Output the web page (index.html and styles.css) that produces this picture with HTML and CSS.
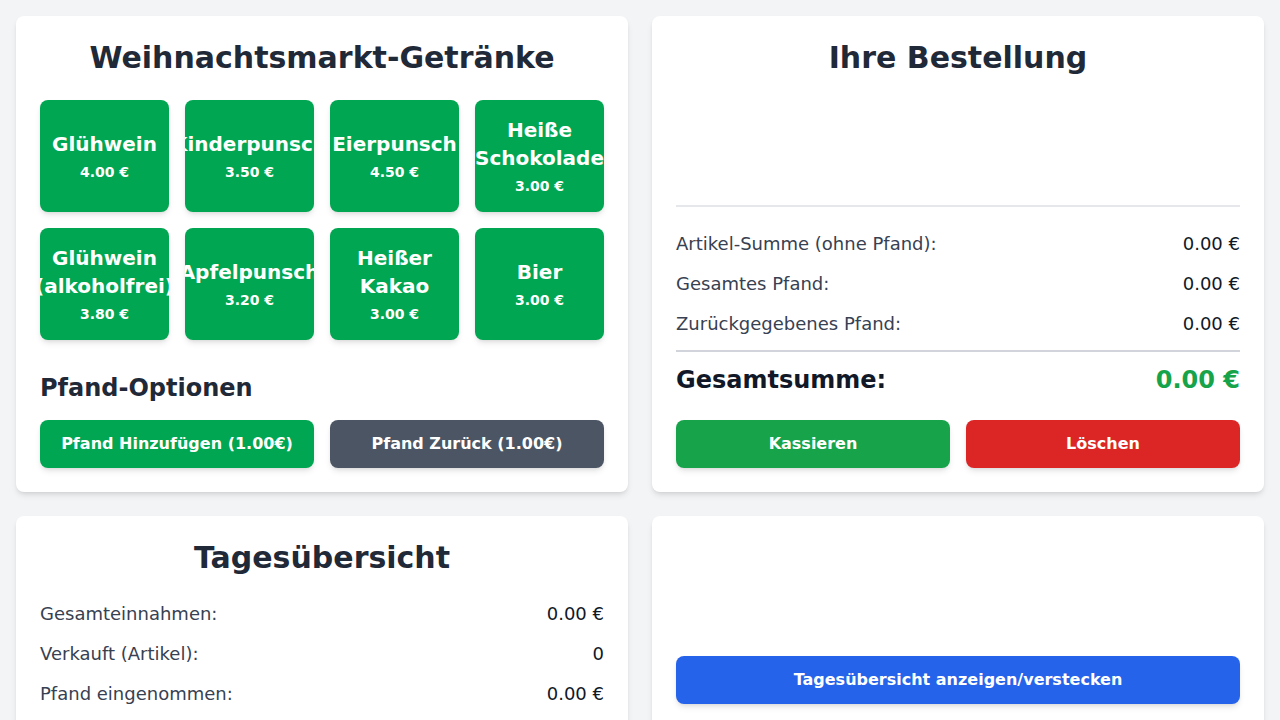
FILE: index.html
```html
<!DOCTYPE html>
<html lang="de">
<head>
<meta charset="utf-8">
<title>Weihnachtsmarkt Kasse</title>
<link rel="stylesheet" href="styles.css">
</head>
<body>
<main class="layout">
  <section class="card">
    <h1 class="card-title">Weihnachtsmarkt-Getränke</h1>
    <div class="drinks">
      <button class="drink"><span class="drink-name">Glühwein</span><span class="drink-price">4.00 €</span></button>
      <button class="drink"><span class="drink-name">Kinderpunsch</span><span class="drink-price">3.50 €</span></button>
      <button class="drink"><span class="drink-name">Eierpunsch</span><span class="drink-price">4.50 €</span></button>
      <button class="drink"><span class="drink-name">Heiße Schokolade</span><span class="drink-price">3.00 €</span></button>
      <button class="drink"><span class="drink-name">Glühwein (alkoholfrei)</span><span class="drink-price">3.80 €</span></button>
      <button class="drink"><span class="drink-name">Apfelpunsch</span><span class="drink-price">3.20 €</span></button>
      <button class="drink"><span class="drink-name">Heißer Kakao</span><span class="drink-price">3.00 €</span></button>
      <button class="drink"><span class="drink-name">Bier</span><span class="drink-price">3.00 €</span></button>
    </div>
    <h2 class="sub-title">Pfand-Optionen</h2>
    <div class="btn-row">
      <button class="btn btn-green">Pfand Hinzufügen (1.00€)</button>
      <button class="btn btn-gray">Pfand Zurück (1.00€)</button>
    </div>
  </section>

  <section class="card">
    <h1 class="card-title">Ihre Bestellung</h1>
    <div class="order-list"></div>
    <div class="summary">
      <div class="row"><span class="label">Artikel-Summe (ohne Pfand):</span><span class="value">0.00 €</span></div>
      <div class="row"><span class="label">Gesamtes Pfand:</span><span class="value">0.00 €</span></div>
      <div class="row"><span class="label">Zurückgegebenes Pfand:</span><span class="value">0.00 €</span></div>
    </div>
    <div class="total">
      <span class="total-label">Gesamtsumme:</span>
      <span class="total-value">0.00 €</span>
    </div>
    <div class="btn-row actions">
      <button class="btn btn-checkout">Kassieren</button>
      <button class="btn btn-red">Löschen</button>
    </div>
  </section>

  <section class="card">
    <h1 class="card-title">Tagesübersicht</h1>
    <div class="stats">
      <div class="stat"><span class="label">Gesamteinnahmen:</span><span class="value">0.00 €</span></div>
      <div class="stat"><span class="label">Verkauft (Artikel):</span><span class="value">0</span></div>
      <div class="stat"><span class="label">Pfand eingenommen:</span><span class="value">0.00 €</span></div>
    </div>
  </section>

  <section class="card card-bottom">
    <button class="btn btn-blue">Tagesübersicht anzeigen/verstecken</button>
  </section>
</main>
</body>
</html>
```

FILE: styles.css
```css
* {
  box-sizing: border-box;
}

html, body {
  margin: 0;
  padding: 0;
}

body {
  background: #f3f4f6;
  font-family: "DejaVu Sans", sans-serif;
  color: #1f2937;
}

.layout {
  display: grid;
  grid-template-columns: 1fr 1fr;
  gap: 24px;
  padding: 16px;
}

.card {
  background: #ffffff;
  border-radius: 8px;
  padding: 24px;
  box-shadow: 0 4px 6px -1px rgba(0, 0, 0, 0.1), 0 2px 4px -2px rgba(0, 0, 0, 0.1);
  display: flex;
  flex-direction: column;
}

.card-title {
  margin: 0 0 24px;
  font-size: 30px;
  line-height: 36px;
  font-weight: 700;
  text-align: center;
  color: #1f2937;
}

.drinks {
  display: grid;
  grid-template-columns: repeat(4, 1fr);
  gap: 16px;
}

button {
  font-family: inherit;
  border: 0;
  cursor: pointer;
}

.drink {
  height: 112px;
  background: #00a651;
  color: #ffffff;
  border-radius: 8px;
  padding: 0;
  display: flex;
  flex-direction: column;
  align-items: center;
  justify-content: center;
  overflow: hidden;
  box-shadow: 0 4px 6px -1px rgba(0, 0, 0, 0.1), 0 2px 4px -2px rgba(0, 0, 0, 0.1);
  min-width: 0;
}

.drink-name {
  font-size: 20px;
  line-height: 28px;
  font-weight: 700;
  text-align: center;
}

.drink-price {
  margin-top: 4px;
  font-size: 14px;
  line-height: 20px;
  font-weight: 700;
}

.sub-title {
  margin: 32px 0 16px;
  font-size: 24px;
  line-height: 32px;
  font-weight: 700;
  color: #1f2937;
}

.btn-row {
  display: grid;
  grid-template-columns: 1fr 1fr;
  gap: 16px;
}

.btn {
  height: 48px;
  border-radius: 8px;
  color: #ffffff;
  font-size: 16px;
  line-height: 24px;
  font-weight: 700;
  box-shadow: 0 4px 6px -1px rgba(0, 0, 0, 0.1), 0 2px 4px -2px rgba(0, 0, 0, 0.1);
}

.btn-green { background: #00a651; }
.btn-gray { background: #4b5563; }
.btn-checkout { background: #16a34a; }
.btn-red { background: #dc2626; }
.btn-blue { background: #2563eb; width: 100%; }

.order-list {
  height: 105px;
}

.summary {
  border-top: 2px solid #e5e7eb;
  padding-top: 17px;
}

.row {
  display: flex;
  justify-content: space-between;
  padding: 8px 0;
  font-size: 18px;
  line-height: 24px;
}

.label {
  color: #374151;
}

.value {
  color: #111827;
}

.total {
  margin-top: 6px;
  border-top: 2px solid #d1d5db;
  padding-top: 12px;
  display: flex;
  justify-content: space-between;
  font-size: 24px;
  line-height: 32px;
  font-weight: 700;
}

.total-label {
  color: #111827;
}

.total-value {
  color: #16a34a;
}

.actions {
  margin-top: 24px;
}

.stats {
  display: flex;
  flex-direction: column;
  gap: 16px;
  padding-top: 2px;
  margin-bottom: -2px;
}

.stat {
  display: flex;
  justify-content: space-between;
  font-size: 18px;
  line-height: 24px;
}

.card-bottom {
  justify-content: flex-end;
}
```
